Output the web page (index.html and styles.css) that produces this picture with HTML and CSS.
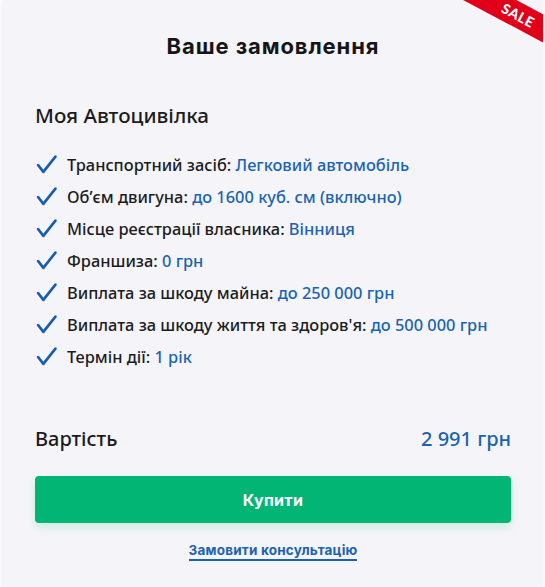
FILE: index.html
```html
<!DOCTYPE html>
<html lang="uk">
<head>
<meta charset="utf-8">
<link rel="stylesheet" href="styles.css">
</head>
<body>
<div class="card">
  <div class="ribbon"><span>SALE</span></div>
  <h1 class="title">Ваше замовлення</h1>
  <h2 class="product">Моя Автоцивілка</h2>
  <ul class="features">
    <li><svg class="check" viewBox="0 0 20 20"><path d="M2 10.5 L7 17 L18.5 2.5"/></svg><span>Транспортний засіб: <b>Легковий автомобіль</b></span></li>
    <li><svg class="check" viewBox="0 0 20 20"><path d="M2 10.5 L7 17 L18.5 2.5"/></svg><span>Об’єм двигуна: <b>до 1600 куб. см (включно)</b></span></li>
    <li><svg class="check" viewBox="0 0 20 20"><path d="M2 10.5 L7 17 L18.5 2.5"/></svg><span>Місце реєстрації власника: <b>Вінниця</b></span></li>
    <li><svg class="check" viewBox="0 0 20 20"><path d="M2 10.5 L7 17 L18.5 2.5"/></svg><span>Франшиза: <b>0 грн</b></span></li>
    <li><svg class="check" viewBox="0 0 20 20"><path d="M2 10.5 L7 17 L18.5 2.5"/></svg><span>Виплата за шкоду майна: <b>до 250 000 грн</b></span></li>
    <li><svg class="check" viewBox="0 0 20 20"><path d="M2 10.5 L7 17 L18.5 2.5"/></svg><span>Виплата за шкоду життя та здоров'я: <b>до 500 000 грн</b></span></li>
    <li><svg class="check" viewBox="0 0 20 20"><path d="M2 10.5 L7 17 L18.5 2.5"/></svg><span>Термін дії: <b>1 рік</b></span></li>
  </ul>
  <div class="price-row">
    <span class="price-label">Вартість</span>
    <span class="price">2 991 грн</span>
  </div>
  <button class="buy">Купити</button>
  <div class="consult-wrap"><a class="consult" href="#">Замовити консультацію</a></div>
</div>
</body>
</html>
```
FILE: styles.css
```css
* { box-sizing: border-box; }
html, body { margin: 0; padding: 0; background: #ffffff; }
body { padding: 0 2px; }
.card {
  position: relative;
  overflow: hidden;
  background: #f5f5f9;
  height: 587px;
  padding: 0 32px 0 33px;
  box-shadow: 0 1px 4px rgba(0,0,0,0.08);
  font-family: "Noto Sans", "Open Sans", sans-serif;
  color: #1b1b1f;
}
.ribbon {
  position: absolute;
  left: 445px;
  top: 2px;
  width: 140px;
  height: 25px;
  background: #e1001a;
  transform: rotate(28deg);
  display: flex;
  align-items: center;
  justify-content: center;
}
.ribbon span {
  color: #fff;
  font-family: "Lato", sans-serif;
  font-weight: 900;
  font-size: 14px;
  line-height: 15px;
  letter-spacing: 0.6px;
  margin-left: 3px;
}
.title {
  margin: 32px 0 0;
  text-align: center;
  font-family: "Inter", "Lato", sans-serif;
  font-weight: 700;
  font-size: 22px;
  letter-spacing: 0.9px;
  line-height: 28px;
  color: #16161a;
}
.product {
  margin: 41px 0 0;
  font-size: 20.6px;
  line-height: 28px;
  font-weight: 500;
  color: #1b1b1f;
}
.features {
  list-style: none;
  margin: 19px 0 0;
  padding: 0;
}
.features li {
  display: flex;
  align-items: center;
  height: 32px;
  font-size: 16.4px;
  font-weight: 500;
}
.check {
  width: 21px;
  height: 21px;
  margin: 0 10px 0 1px;
  fill: none;
  stroke: #165dab;
  stroke-width: 2.5;
  stroke-linecap: round;
  stroke-linejoin: round;
  flex: none;
}
.features b {
  font-weight: 500;
  color: #1a63b0;
}
.price-row {
  margin-top: 52px;
  display: flex;
  justify-content: space-between;
  align-items: center;
  height: 28px;
  font-size: 20px;
  font-weight: 500;
}
.price { color: #1a63b0; }
.buy {
  display: block;
  width: 100%;
  margin-top: 24px;
  height: 47px;
  border: 0;
  border-radius: 4px;
  background: #03b574;
  color: #fff;
  font-family: "Inter", "Lato", sans-serif;
  font-weight: 700;
  font-size: 16px;
  letter-spacing: 0.3px;
  box-shadow: 0 4px 10px rgba(3,181,116,0.18);
}
.consult-wrap {
  margin-top: 16px;
  text-align: center;
  line-height: 20px;
}
.consult {
  font-family: "Inter", "Lato", sans-serif;
  font-weight: 700;
  font-size: 13.5px;
  letter-spacing: 0.2px;
  color: #1a63b0;
  text-decoration: none;
  border-bottom: 2px solid #1a63b0;
  padding-bottom: 1px;
}
```
